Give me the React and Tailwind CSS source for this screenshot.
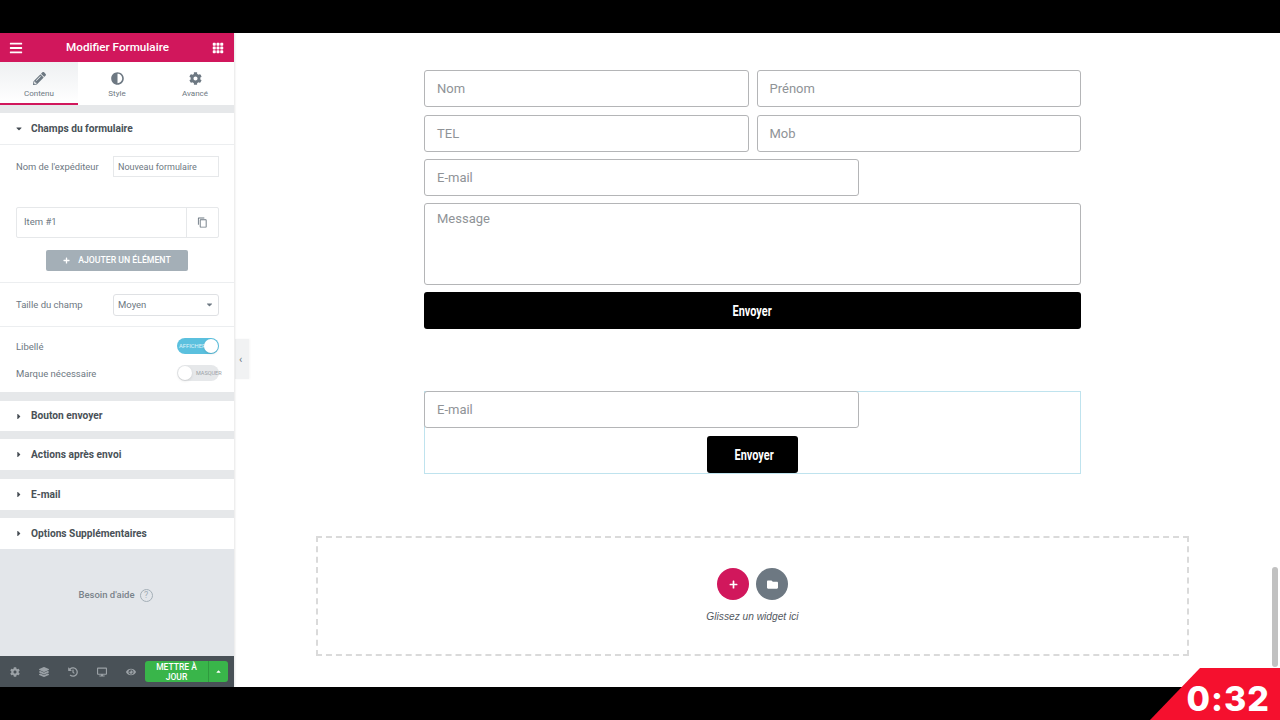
import React from "react";
import { FaPencilAlt, FaAdjust, FaCog, FaBars, FaPlus, FaFolder, FaCaretDown, FaCaretRight, FaCaretUp, FaHistory, FaDesktop, FaEye, FaLayerGroup } from "react-icons/fa";
import { BsGrid3X3GapFill } from "react-icons/bs";
import { MdOutlineContentCopy } from "react-icons/md";

function Tab({ icon, label, active }) {
  return (
    <div className={`w-[78px] h-[43px] flex flex-col items-center pt-[9px] border-b-2 ${active ? "border-[#d1175c] bg-gradient-to-b from-[#eef0f2] to-white" : "border-transparent"}`}>
      <span className="text-[13px] text-[#6d7882] h-[14px] flex items-center">{icon}</span>
      <span className="text-[8px] leading-[10px] mt-[4px] text-[#6d7882]">{label}</span>
    </div>
  );
}

function Section({ title, open, className = "h-[31px]" }) {
  return (
    <div className={`bg-white flex items-center pl-[15px] gap-[8px] shrink-0 ${className}`}>
      <span className="w-[8px] flex justify-center text-[9px] text-[#444b52]">{open ? <FaCaretDown /> : <FaCaretRight />}</span>
      <span className="text-[10.2px] font-bold text-[#495157]">{title}</span>
    </div>
  );
}

function Field({ text, className = "" }) {
  return (
    <div className={`h-[37px] border border-[#b4b5b7] rounded-[3px] bg-white flex items-center pl-[12px] text-[13px] text-[#8f9397] ${className}`}>{text}</div>
  );
}

function Envoyer({ className = "", textClass = "" }) {
  return (
    <div className={`h-[37px] bg-black rounded-[3px] flex items-center justify-center pt-px ${className}`}>
      <span className={`text-[14px] font-bold text-white scale-x-[0.78] font-['Roboto'] ${textClass}`}>Envoyer</span>
    </div>
  );
}

function FooterIcon({ children }) {
  return <span className="w-[29px] flex justify-center text-[10px] text-[#9ba1a6]">{children}</span>;
}

export default function App() {
  return (
    <div className="relative w-[1280px] h-[720px] bg-black flex flex-col overflow-hidden font-['Roboto',sans-serif]">
      <div className="h-[33px] shrink-0" />
      <div className="h-[654px] flex bg-white">
        <aside className="w-[234px] shrink-0 bg-[#e3e6ea] flex flex-col shadow-[1px_0_2px_rgba(0,0,0,0.1)] z-10">
          <header className="h-[29px] bg-[#d1175c] flex items-center justify-between pl-[9px] pr-[10px] text-white shrink-0">
            <FaBars className="text-[14px]" />
            <span className="text-[11.7px] font-medium">Modifier Formulaire</span>
            <BsGrid3X3GapFill className="text-[12px]" />
          </header>
          <div className="flex bg-white shrink-0 h-[43px]">
            <Tab icon={<FaPencilAlt />} label="Contenu" active />
            <Tab icon={<FaAdjust />} label="Style" />
            <Tab icon={<FaCog />} label="Avancé" />
          </div>
          <div className="h-[8px] bg-[#e6e8ea] shrink-0" />
          <div className="bg-white shrink-0 h-[279px] flex flex-col">
            <Section title="Champs du formulaire" open />
            <div className="border-t border-[#eceef0] flex flex-col pl-[16px] pr-[15px] h-[138px]">
              <div className="flex items-center justify-between mt-[11px] text-[9.4px] text-[#6d7882]">
                <span className="pt-px">Nom de l'expéditeur</span>
                <div className="w-[106px] h-[21px] border border-[#e6e8ea] flex items-center pl-[4px] pt-[2px] text-[9px] text-[#6d7882]">Nouveau formulaire</div>
              </div>
              <div className="mt-[30px] h-[31px] border border-[#e6e8ea] rounded-[2px] flex">
                <div className="flex-1 flex items-center pl-[7px] text-[9.5px] text-[#6d7882]">Item #1</div>
                <div className="w-[32px] border-l border-[#e6e8ea] flex items-center justify-center text-[11px] text-[#6d7882]"><MdOutlineContentCopy /></div>
              </div>
              <div className="mt-[12px] ml-[30px] w-[142px] h-[21px] rounded-[2px] bg-[#a4afb7] flex items-center justify-center gap-[8px] text-white">
                <FaPlus className="text-[7px]" />
                <span className="text-[8.7px] font-medium">AJOUTER UN ÉLÉMENT</span>
              </div>
            </div>
            <div className="border-t border-[#eceef0] h-[44px] pl-[16px] pr-[15px] flex items-center justify-between text-[9.5px] text-[#6d7882] shrink-0">
              <span className="pt-px">Taille du champ</span>
              <div className="w-[106px] h-[22px] border border-[#dfe1e4] rounded-[3px] flex items-center justify-between pl-[4px] pr-[4px]">
                <span className="pt-px">Moyen</span>
                <FaCaretDown className="text-[9px]" />
              </div>
            </div>
            <div className="border-t border-[#eceef0] pl-[16px] pr-[15px] pt-[11px] flex flex-col gap-[11px] text-[9.5px] text-[#6d7882]">
              <div className="flex items-center justify-between h-[16px]">
                <span className="pt-[2px]">Libellé</span>
                <div className="w-[42px] h-[16px] rounded-full bg-[#5bc0de] flex items-center justify-end relative">
                  <span className="absolute left-[2px] text-[5.8px] text-white/80">AFFICHER</span>
                  <span className="w-[14px] h-[14px] mr-px rounded-full bg-white shadow" />
                </div>
              </div>
              <div className="flex items-center justify-between h-[16px]">
                <span className="pt-[2px]">Marque nécessaire</span>
                <div className="w-[42px] h-[16px] rounded-full bg-[#e6e8ea] flex items-center relative">
                  <span className="w-[14px] h-[14px] ml-px rounded-full bg-white shadow" />
                  <span className="absolute left-[19px] text-[5.5px] text-[#9ba1a6]">MASQUER</span>
                </div>
              </div>
            </div>
          </div>
          <div className="h-[9px] bg-[#e6e8ea] shrink-0" />
          <Section title="Bouton envoyer" className="h-[30px]" />
          <div className="h-[8px] bg-[#e6e8ea] shrink-0" />
          <Section title="Actions après envoi" />
          <div className="h-[9px] bg-[#e6e8ea] shrink-0" />
          <Section title="E-mail" />
          <div className="h-[8px] bg-[#e6e8ea] shrink-0" />
          <Section title="Options Supplémentaires" />
          <div className="flex-1 flex items-center justify-center gap-[5px] pb-[14px] pr-[3px]">
            <span className="text-[9.5px] font-medium text-[#7a838b]">Besoin d'aide</span>
            <span className="w-[13px] h-[13px] rounded-full border border-[#a4afb7] flex items-center justify-center text-[9px] text-[#a4afb7]">?</span>
          </div>
          <footer className="h-[31px] bg-[#495157] flex items-center pr-[6px] shrink-0">
            <FooterIcon><FaCog /></FooterIcon>
            <FooterIcon><FaLayerGroup /></FooterIcon>
            <FooterIcon><FaHistory /></FooterIcon>
            <FooterIcon><FaDesktop /></FooterIcon>
            <FooterIcon><FaEye /></FooterIcon>
            <div className="ml-auto flex h-[21px] rounded-[3px] overflow-hidden bg-[#39b54a] text-white">
              <div className="w-[63px] text-center text-[8.5px] leading-[10px] font-medium pt-px">METTRE À JOUR</div>
              <div className="w-[20px] border-l border-[#2f9a3e] flex items-center justify-center text-[7px]"><FaCaretUp /></div>
            </div>
          </footer>
        </aside>

        <main className="relative flex-1 flex flex-col items-center pt-[37px] min-w-0">
          <div className="w-[14px] h-[40px] absolute left-px top-[306px] bg-[#f1f2f3] shadow-[1px_0_2px_rgba(0,0,0,0.04)] flex items-center pl-[4px] text-[#6d7882]">
            <span className="text-[11px] leading-none">‹</span>
          </div>
          <div className="w-[657px] ml-px flex flex-col gap-[7px]">
            <div className="flex gap-[8px] mb-px">
              <Field text="Nom" className="flex-1" />
              <Field text="Prénom" className="flex-1" />
            </div>
            <div className="flex gap-[8px]">
              <Field text="TEL" className="flex-1" />
              <Field text="Mob" className="flex-1" />
            </div>
            <Field text="E-mail" className="w-[435px]" />
            <div className="h-[82px] border border-[#b4b5b7] rounded-[3px] pl-[12px] pt-[5px] text-[13px] text-[#8f9397]">Message</div>
            <Envoyer />
          </div>
          <div className="w-[657px] ml-px h-[83px] mt-[62px] border border-[#bfe3ee] flex flex-col relative">
            <Field text="E-mail" className="w-[435px] -mt-px -ml-px pt-px" />
            <div className="flex justify-center mt-[8px]">
              <Envoyer className="w-[91px]" textClass="translate-x-[2px]" />
            </div>
          </div>
          <div className="w-[873px] ml-px h-[120px] mt-[62px] border-2 border-dashed border-[#dadada] flex flex-col items-center pt-[30px]">
            <div className="flex gap-[7px]">
              <span className="w-[32px] h-[32px] rounded-full bg-[#d1175c] flex items-center justify-center text-white text-[9px]"><FaPlus /></span>
              <span className="w-[32px] h-[32px] rounded-full bg-[#6d7882] flex items-center justify-center text-white text-[11px]"><FaFolder /></span>
            </div>
            <span className="italic text-[10.2px] text-[#54595f] mt-[9px] font-['Liberation_Sans']">Glissez un widget ici</span>
          </div>
        </main>
        <div className="w-[10px] shrink-0 pt-[534px] pl-[2px] bg-white">
          <div className="w-[6px] h-[100px] rounded-full bg-[#c1c1c1]" />
        </div>
      </div>
      <div className="absolute right-0 bottom-0 w-[130px] h-[52px] bg-[#f5102e] [clip-path:polygon(50px_0,130px_0,130px_52px,0_52px)] flex items-center justify-end pr-[10px] pt-[10px]">
        <span className="font-['Inter'] font-extrabold text-[34px] leading-none text-white tracking-[1px]">0:32</span>
      </div>
    </div>
  );
}
